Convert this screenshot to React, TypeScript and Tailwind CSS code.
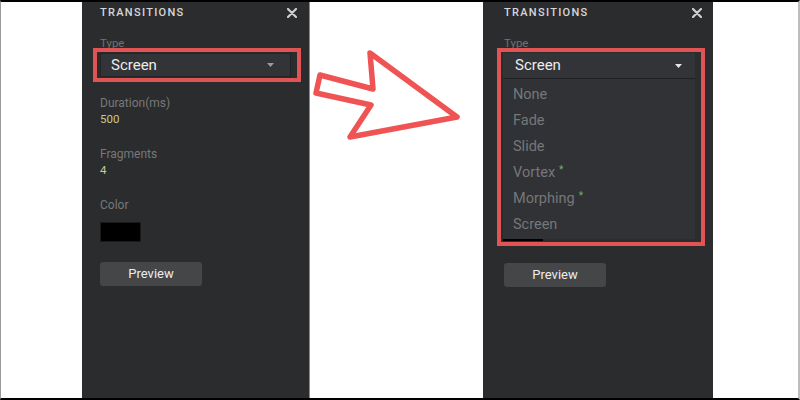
import React from 'react'

const font = { fontFamily: 'Roboto, "Liberation Sans", sans-serif' }

function CloseIcon() {
  return (
    <svg width="10" height="10" viewBox="0 0 10 10">
      <path d="M1 1 L9 9 M9 1 L1 9" stroke="#cfd0d2" strokeWidth="2.2" strokeLinecap="round" />
    </svg>
  )
}

function Caret({ light }: { light?: boolean }) {
  return (
    <svg width="7" height="4" viewBox="0 0 7 4">
      <path d="M0 0 L7 0 L3.5 4 Z" fill={light ? '#e6e6e6' : '#9a9b9d'} />
    </svg>
  )
}

function Header() {
  return (
    <div className="flex h-[13px] items-center justify-between">
      <span className="text-[11px] font-medium leading-[13px] tracking-[1.3px] text-[#d6d7d9]">
        TRANSITIONS
      </span>
      <CloseIcon />
    </div>
  )
}

function Field({ label, value, top }: { label: string; value: string; top: string }) {
  return (
    <div className={top}>
      <div className="h-[14px] text-[12px] leading-[14px] text-[#77787a]">{label}</div>
      <div className="mt-[2px] h-[14px] text-[11.5px] leading-[14px] text-[#c9c98e]">{value}</div>
    </div>
  )
}

function LeftPanel() {
  return (
    <div className="flex h-full w-[228px] flex-col border-r border-[#8a8a8a] bg-[#2b2c2e] pl-[18px] pr-[12px] pt-[4px]">
      <Header />
      <div className="mt-[18px] h-[12px] text-[11.5px] leading-[12px] text-[#6f7072]">Type</div>
      <div className="-ml-[7px] -mr-[4px] -mt-[1px] border-4 border-[#e25454] pl-[3px] pr-[6px] py-px">
        <div className="flex h-[24px] items-center justify-between border border-[#222325] bg-[#323437] pl-[10px] pr-[16px]">
          <span className="text-[15px] text-[#ececec]">Screen</span>
          <Caret />
        </div>
      </div>
      <Field label="Duration(ms)" value="500" top="mt-[14px]" />
      <Field label="Fragments" value="4" top="mt-[21px]" />
      <div className="mt-[21px] h-[14px] text-[12px] leading-[14px] text-[#77787a]">Color</div>
      <div className="mt-[10px] h-[20px] w-[41px] border border-[#1a1a1a] bg-black" />
      <button className="mt-[20px] h-[24px] w-[102px] rounded-[3px] bg-[#454648] text-[13px] text-[#ededed]">
        Preview
      </button>
    </div>
  )
}

const options: { name: string; star?: boolean }[] = [
  { name: 'None' },
  { name: 'Fade' },
  { name: 'Slide' },
  { name: 'Vortex', star: true },
  { name: 'Morphing', star: true },
  { name: 'Screen' }
]

function RightPanel() {
  return (
    <div className="flex h-full w-[230px] flex-col bg-[#2b2c2e] pl-[21px] pr-[11px] pt-[4px]">
      <Header />
      <div className="mt-[18px] h-[12px] text-[11.5px] leading-[12px] text-[#6f7072]">Type</div>
      <div className="-ml-[7px] -mr-[3px] -mt-[1px] border-4 border-[#e25454] pl-[2px] pr-[6px] pt-px pb-[1px]">
        <div className="flex h-[26px] items-center justify-between border-b border-[#1f2022] bg-[#323437] pl-[12px] pr-[13px]">
          <span className="text-[15px] text-[#ececec]">Screen</span>
          <Caret light />
        </div>
        <div className="bg-[#303235] pt-[3px] pb-px">
          {options.map((o) => (
            <div key={o.name} className="flex h-[26px] items-center pl-[10px] text-[14.5px] text-[#76777a]">
              {o.name}
              {o.star && <span className="ml-[4px] -mt-[8px] text-[10px] text-[#6fb36f]">*</span>}
            </div>
          ))}
        </div>
        <div className="h-[2px] w-[40px] bg-black" />
      </div>
      <button className="mt-[17px] h-[24px] w-[102px] rounded-[3px] bg-[#454648] text-[13px] text-[#ededed]">
        Preview
      </button>
    </div>
  )
}

function Arrow() {
  return (
    <svg width="173" height="110" viewBox="0 0 173 110" className="mt-[40px]">
      <path
        d="M10 33 L63 47 L60 11 L147 75 L40 95 L61 63 L6 51 Z"
        fill="none"
        stroke="#ef5353"
        strokeWidth="5.5"
        strokeLinejoin="round"
      />
    </svg>
  )
}

export default function App() {
  return (
    <div
      className="flex h-[400px] w-[800px] border-y-2 border-l border-r-2 border-y-black border-l-[#9a9a9a] border-r-[#bdbdbd] bg-white"
      style={font}
    >
      <div className="w-[81px] shrink-0" />
      <LeftPanel />
      <div className="w-[173px] shrink-0">
        <Arrow />
      </div>
      <RightPanel />
      <div className="flex-1" />
    </div>
  )
}
